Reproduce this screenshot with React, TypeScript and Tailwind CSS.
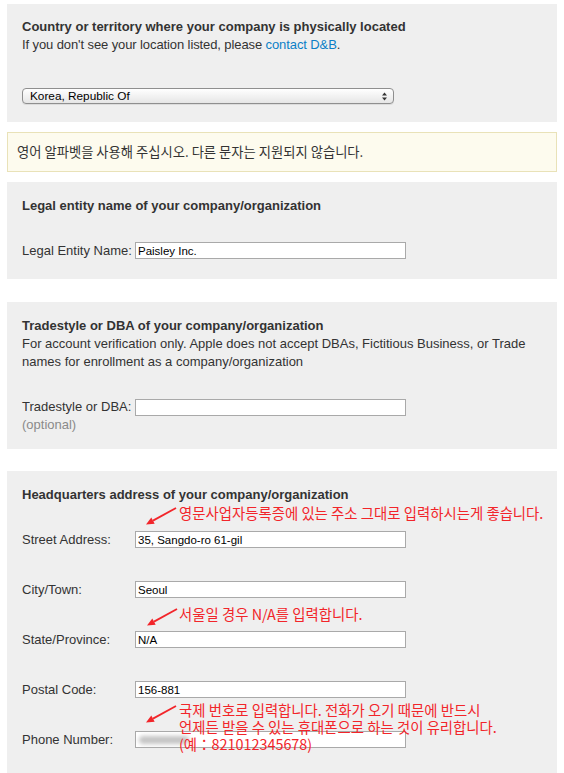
import type { ReactNode } from "react";

const RED = "#f2252a";

function Panel({ children, className = "" }: { children: ReactNode; className?: string }) {
  return <section className={`relative bg-[#efefef] px-[15px] ${className}`}>{children}</section>;
}

function Field({ value, children }: { value?: string; children?: ReactNode }) {
  return (
    <div className="relative h-[17px] w-[271px] border border-[#a9a9a9] bg-white">
      <input
        readOnly
        value={value ?? ""}
        className="block h-full w-full bg-transparent px-[2px] font-['Liberation_Sans',Arial,sans-serif] text-[11.5px] text-black outline-none"
      />
      {children}
    </div>
  );
}

function Row({ label, value, className = "", children }: { label: string; value?: string; className?: string; children?: ReactNode }) {
  return (
    <div className={`flex h-[17px] items-center ${className}`}>
      <span className="w-[113px] shrink-0 leading-[16px]">{label}</span>
      <Field value={value}>{children}</Field>
    </div>
  );
}

function Arrow({ left, top }: { left: number; top: number }) {
  return (
    <svg className="absolute" style={{ left, top }} width="36" height="22" viewBox="0 0 36 22">
      <line x1="33" y1="2" x2="10" y2="14.6" stroke={RED} strokeWidth="1.8" />
      <polygon points="3,18.5 8.3,11.5 11.7,17.7" fill={RED} />
    </svg>
  );
}

function Note({ left, top, lines }: { left: number; top: number; lines: string[] }) {
  return (
    <div
      className="absolute whitespace-nowrap font-['Noto_Sans_CJK_KR',sans-serif] text-[14.4px] leading-[17px] text-[#f2252a]"
      style={{ left, top }}
    >
      {lines.map((l) => (
        <div key={l}>{l}</div>
      ))}
    </div>
  );
}

export default function App() {
  return (
    <main className="min-h-screen bg-white px-[7px] pt-[4px] font-['Liberation_Sans',Arial,'Noto_Sans_CJK_KR',sans-serif] text-[13px] leading-[18px] text-[#333]">
      <Panel className="pt-[14px] pb-[18px]">
        <h2 className="font-bold">Country or territory where your company is physically located</h2>
        <p className="tracking-[-0.1px]">
          If you don't see your location listed, please{" "}
          <a href="#" className="text-[#0b7fc7]">
            contact D&amp;B
          </a>
          .
        </p>
        <div className="mt-[34px] flex h-[16px] w-[372px] items-center justify-between rounded-[4px] border border-[#8f8f8f] bg-gradient-to-b from-white to-[#e6e6e6] pl-[7px] pr-[6px] text-[11.8px] leading-[14px] text-black shadow-[0_1px_0_rgba(0,0,0,0.08)]">
          <span>Korea, Republic Of</span>
          <svg width="5" height="9" viewBox="0 0 5 9">
            <polygon points="2.5,0.5 5,3.5 0,3.5" fill="#333" />
            <polygon points="0,5.5 5,5.5 2.5,8.5" fill="#333" />
          </svg>
        </div>
      </Panel>

      <div className="mt-[10px] flex h-[40px] items-center border border-[#e9e2b8] bg-[#fdfbee] pl-[9px] font-['Noto_Sans_CJK_KR',sans-serif] text-[13.3px] text-[#333]">
        영어 알파벳을 사용해 주십시오. 다른 문자는 지원되지 않습니다.
      </div>

      <Panel className="mt-[10px] pt-[15px] pb-[20px]">
        <h2 className="font-bold">Legal entity name of your company/organization</h2>
        <Row label="Legal Entity Name:" value="Paisley Inc." className="mt-[27px]" />
      </Panel>

      <Panel className="mt-[23px] pt-[15px] pb-[15px]">
        <h2 className="font-bold">Tradestyle or DBA of your company/organization</h2>
        <p>
          For account verification only. Apple does not accept DBAs, Fictitious Business, or Trade
          names for enrollment as a company/organization
        </p>
        <div className="mt-[27px] flex items-start">
          <div className="w-[113px] shrink-0">
            <div>Tradestyle or DBA:</div>
            <div className="text-[#8a8a8a]">(optional)</div>
          </div>
          <div className="mt-[1px]">
            <Field />
          </div>
        </div>
      </Panel>

      <Panel className="mt-[22px] pt-[15px] pb-[30px]">
        <h2 className="font-bold">Headquarters address of your company/organization</h2>
        <Row label="Street Address:" value="35, Sangdo-ro 61-gil" className="mt-[27px]" />
        <Row label="City/Town:" value="Seoul" className="mt-[33px]" />
        <Row label="State/Province:" value="N/A" className="mt-[33px]" />
        <Row label="Postal Code:" value="156-881" className="mt-[33px]" />
        <Row label="Phone Number:" className="mt-[33px]">
          <div className="absolute left-[3px] top-[4px] h-[8px] w-[50px] rounded-full bg-[#c4c4c4] blur-[2px]" />
        </Row>

        <Arrow left={136} top={35} />
        <Note left={172} top={32.5} lines={["영문사업자등록증에 있는 주소 그대로 입력하시는게 좋습니다."]} />

        <Arrow left={137} top={136} />
        <Note left={172} top={133.5} lines={["서울일 경우 N/A를 입력합니다."]} />

        <Arrow left={136} top={233} />
        <Note
          left={172}
          top={229.5}
          lines={[
            "국제 번호로 입력합니다. 전화가 오기 때문에 반드시",
            "언제든 받을 수 있는 휴대폰으로 하는 것이 유리합니다.",
            "(예：821012345678)",
          ]}
        />
      </Panel>
    </main>
  );
}
